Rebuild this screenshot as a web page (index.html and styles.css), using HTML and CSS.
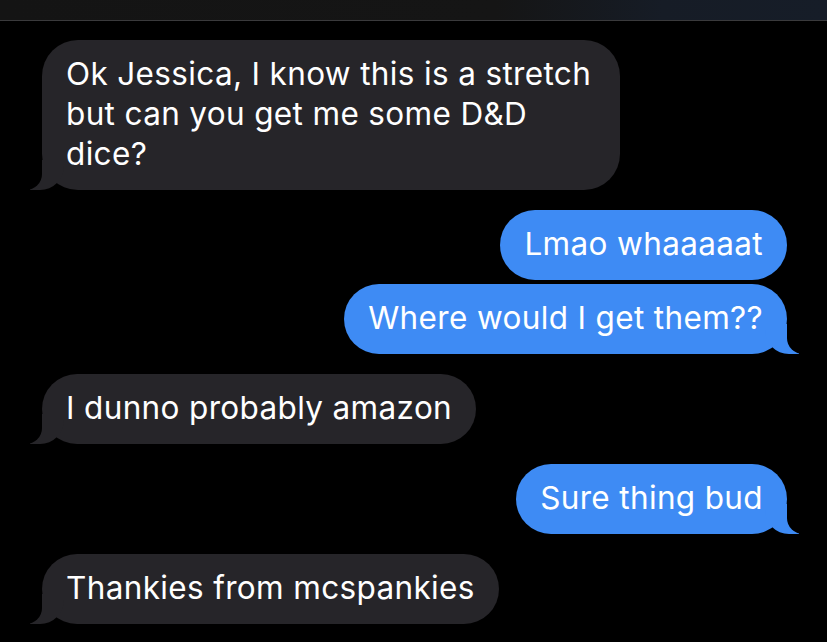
FILE: index.html
```html
<!DOCTYPE html>
<html lang="en">
<head>
  <meta charset="UTF-8" />
  <meta name="viewport" content="width=device-width, initial-scale=1.0" />
  <title>Messages</title>
  <link rel="stylesheet" href="styles.css">
</head>
<body>
  <!-- horní lišta -->
  <div class="top-bar"></div>

  <!-- zprávy -->
  <div class="thread">
    <div class="msg them tail long">Ok Jessica, I know this is a stretch<br>but can you get me some D&amp;D<br>dice?</div>
    <div class="msg me">Lmao whaaaaat</div>
    <div class="msg me tail close">Where would I get them??</div>
    <div class="msg them tail">I dunno probably amazon</div>
    <div class="msg me tail">Sure thing bud</div>
    <div class="msg them tail">Thankies from mcspankies</div>
  </div>
</body>
</html>
```
FILE: styles.css
```css
body {
  margin: 0;
  background: #000;
  font-family: Inter, "Open Sans", sans-serif;
  color: #fff;
  overflow: hidden;
}

/* === horní lišta === */
.top-bar {
  height: 20px;
  background: linear-gradient(90deg, #141414 0%, #151515 60%, #161c26 80%, #161d28 100%);
  border-bottom: 1px solid #3a3a3c;
}

/* === zprávy === */
.thread {
  display: flex;
  flex-direction: column;
  padding: 19px 40px 0 42px;
  gap: 20px;
}
.msg {
  position: relative;
  padding: 14px 24px 16px;
  font-size: 31.5px;
  line-height: 40px;
  border-radius: 36px;
  letter-spacing: 0.35px;
}
.msg.long {
  box-sizing: border-box;
  width: 578px;
}
.msg.close {
  margin-top: -16px;
}
.them {
  align-self: flex-start;
  background: #262529;
}
.me {
  align-self: flex-end;
  background: #3e8bf4;
}

/* ocásek bubliny */
.tail::before,
.tail::after {
  content: "";
  position: absolute;
  bottom: 0;
  height: 30px;
}
.them.tail::before {
  left: -12px;
  width: 34px;
  background: #262529;
  border-bottom-right-radius: 24px;
}
.them.tail::after {
  left: -20px;
  width: 20px;
  background: #000;
  border-bottom-right-radius: 16px;
}
.me.tail::before {
  right: -12px;
  width: 34px;
  background: #3e8bf4;
  border-bottom-left-radius: 24px;
}
.me.tail::after {
  right: -20px;
  width: 20px;
  background: #000;
  border-bottom-left-radius: 16px;
}
```
